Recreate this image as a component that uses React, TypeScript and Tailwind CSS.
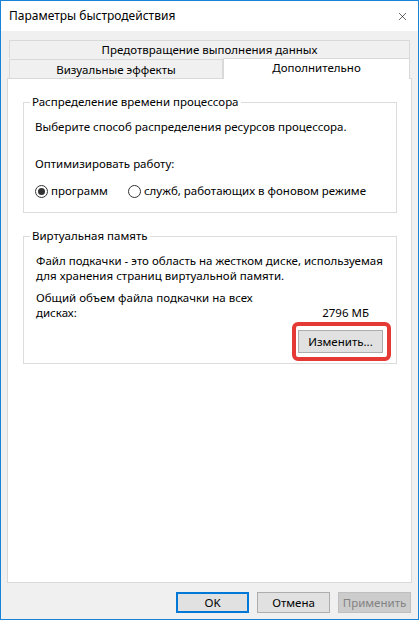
import { X } from 'lucide-react';

const Radio = ({ checked, label }: { checked?: boolean; label: string }) => (
  <div className="flex items-center gap-[3px]">
    <span className="w-[13px] h-[13px] rounded-full border border-[#333] bg-white flex items-center justify-center">
      {checked && <span className="w-[7px] h-[7px] rounded-full bg-[#333]" />}
    </span>
    <span>{label}</span>
  </div>
);

const Btn = ({ label, primary, disabled }: { label: string; primary?: boolean; disabled?: boolean }) => (
  <button
    className={
      primary
        ? 'w-[73px] h-[21px] border-2 border-[#0078d7] bg-[#e1e1e1] leading-[17px]'
        : disabled
        ? 'w-[73px] h-[21px] border border-[#bfbfbf] bg-[#cccccc] text-[#838383] leading-[19px]'
        : 'w-[73px] h-[21px] border border-[#adadad] bg-[#e1e1e1] leading-[19px]'
    }
  >
    {label}
  </button>
);

export default function App() {
  return (
    <div className="w-[419px] h-[620px] flex flex-col border border-[#1883d7] bg-[#f0f0f0] text-[11.5px] leading-[16px] text-black whitespace-nowrap font-['Noto_Sans',sans-serif]">
      {/* title bar */}
      <div className="h-[30px] shrink-0 bg-white flex items-center justify-between pl-[8px] pr-[9px] text-[12px]">
        <span>Параметры быстродействия</span>
        <X className="w-[13px] h-[13px] text-black" strokeWidth={1.1} />
      </div>

      <div className="flex-1 flex flex-col px-[6px] pt-[9px]">
        {/* tabs */}
        <div className="mx-[2px]">
          <div className="h-[18px] border-t border-x border-[#d9d9d9] flex items-center justify-center">
            Предотвращение выполнения данных
          </div>
          <div className="flex items-end">
            <div className="w-[214px] h-[19px] border border-b-0 border-[#d9d9d9] flex items-center justify-center pt-[1px]">
              Визуальные эффекты
            </div>
            <div className="relative z-10 flex-1 h-[21px] -mb-px bg-white border-t border-x border-[#d9d9d9] flex items-center justify-center pb-[2px]">
              Дополнительно
            </div>
          </div>
        </div>

        {/* panel */}
        <div className="h-[505px] bg-white border border-[#d9d9d9] pl-[15px] pr-[14px]">
          {/* group 1 */}
          <div className="relative mt-[23px] h-[111px] border border-[#dcdcdc] pl-[11px] pt-[16px]">
            <span className="absolute -top-[9px] left-[6px] bg-white px-[2px]">
              Распределение времени процессора
            </span>
            <div>Выберите способ распределения ресурсов процессора.</div>
            <div className="mt-[21px]">Оптимизировать работу:</div>
            <div className="mt-[11px] flex items-center gap-[20px]">
              <Radio checked label="программ" />
              <Radio label="служб, работающих в фоновом режиме" />
            </div>
          </div>

          {/* group 2 */}
          <div className="relative mt-[23px] h-[128px] border border-[#dcdcdc] pl-[12px] pr-[27px] pt-[16px] leading-[15px]">
            <span className="absolute -top-[9px] left-[6px] bg-white px-[2px] leading-[16px]">
              Виртуальная память
            </span>
            <div>
              Файл подкачки - это область на жестком диске, используемая
              <br />
              для хранения страниц виртуальной памяти.
            </div>
            <div className="mt-[7px] flex items-end justify-between">
              <div>
                Общий объем файла подкачки на всех
                <br />
                дисках:
              </div>
              <div>2796 МБ</div>
            </div>
            <div className="mt-[10px] flex justify-end -mr-[14px]">
              <div className="relative">
                <button className="w-[85px] h-[23px] border border-[#adadad] bg-[#e1e1e1]">
                  Изменить...
                </button>
                <span className="absolute -left-[6px] -right-[8px] -top-[8px] -bottom-[8px] rounded-[6px] border-[4px] border-[#e53935]" />
              </div>
            </div>
          </div>
        </div>

        {/* buttons */}
        <div className="mt-[9px] flex justify-end gap-[8px] pr-[1px]">
          <Btn label="OK" primary />
          <Btn label="Отмена" />
          <Btn label="Применить" disabled />
        </div>
      </div>
    </div>
  );
}
